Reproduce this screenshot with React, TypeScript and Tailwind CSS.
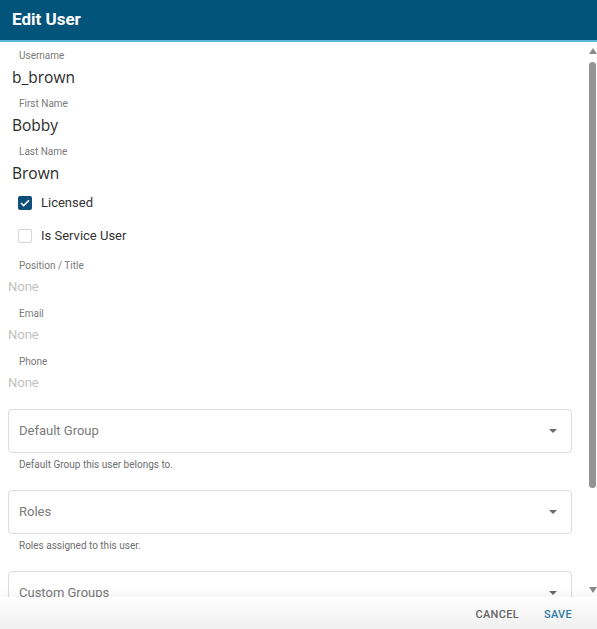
import React from 'react';

const textFields = [
    { label: 'Username', value: 'b_brown' },
    { label: 'First Name', value: 'Bobby' },
    { label: 'Last Name', value: 'Brown' },
];

const emptyFields = ['Position / Title', 'Email', 'Phone'];

const selects = [
    { label: 'Default Group', help: 'Default Group this user belongs to.' },
    { label: 'Roles', help: 'Roles assigned to this user.' },
    { label: 'Custom Groups', help: '' },
];

function Caret() {
    return (
        <svg width="8" height="4" viewBox="0 0 8 4" className="text-[#6b6b6b]">
            <path d="M0 0h8L4 4z" fill="currentColor" />
        </svg>
    );
}

export default function App() {
    return (
        <div className="h-[629px] w-[597px] flex flex-col bg-white font-['Roboto',sans-serif] overflow-hidden">
            {/* Header */}
            <div className="h-[42px] shrink-0 bg-[#03547b] border-b-2 border-[#5cb6da] flex items-center px-3">
                <h1 className="text-white text-[17px] font-bold">Edit User</h1>
            </div>

            {/* Body */}
            <div className="flex-1 flex min-h-0">
                <div className="flex-1 overflow-hidden pt-[3px] pr-4">
                    {textFields.map((f) => (
                        <div key={f.label} className="mb-1">
                            <div className="h-5 flex items-center pl-[19px] text-[10px] text-[#7a7a7a]">{f.label}</div>
                            <div className="h-6 flex items-center pl-3 pt-[2px] text-[15.5px] text-[#2b2b2b] font-['Open_Sans',sans-serif]">{f.value}</div>
                        </div>
                    ))}

                    <div className="h-[33px] flex items-center pl-[18px] gap-[9px] -mt-[3px]">
                        <span className="w-[14px] h-[14px] rounded-[2px] bg-[#0d4f78] flex items-center justify-center">
                            <svg width="10" height="8" viewBox="0 0 10 8">
                                <path d="M1 4l2.6 2.6L9 1.2" stroke="white" strokeWidth="1.6" fill="none" />
                            </svg>
                        </span>
                        <span className="text-[13px] text-[#333]">Licensed</span>
                    </div>
                    <div className="h-[33px] flex items-center pl-[18px] gap-[9px]">
                        <span className="w-[14px] h-[14px] rounded-[2px] border border-[#d6d6d6] bg-white" />
                        <span className="text-[13px] text-[#333]">Is Service User</span>
                    </div>

                    <div className="pt-[3px]">
                        {emptyFields.map((l) => (
                            <div key={l} className="mb-1">
                                <div className="h-5 flex items-center pl-[19px] text-[10px] text-[#7a7a7a]">{l}</div>
                                <div className="h-6 flex items-center pl-2 text-[13px] text-[#c2c2c2]">None</div>
                            </div>
                        ))}
                    </div>

                    <div className="pl-2 pt-[10px]">
                        {selects.map((s) => (
                            <div key={s.label}>
                                <div className="h-[44px] rounded border border-[#dcdcdc] flex items-center justify-between pl-[10px] pr-[14px]">
                                    <span className="text-[13px] text-[#7a7a7a]">{s.label}</span>
                                    <Caret />
                                </div>
                                <div className="h-4 mt-[3px] mb-[18px] flex items-center pl-[11px] text-[10px] text-[#6e6e6e]">{s.help}</div>
                            </div>
                        ))}
                    </div>
                </div>

                {/* Scrollbar */}
                <div className="w-[9px] shrink-0 flex flex-col items-center pt-[6px] pb-[4px]">
                    <svg width="8" height="6" viewBox="0 0 8 6" className="text-[#8a8a8a]">
                        <path d="M4 0L8 6H0z" fill="currentColor" />
                    </svg>
                    <div className="w-[7px] h-[426px] mt-[8px] rounded-full bg-[#949494]" />
                    <div className="flex-1" />
                    <svg width="8" height="6" viewBox="0 0 8 6" className="text-[#8a8a8a]">
                        <path d="M0 0h8L4 6z" fill="currentColor" />
                    </svg>
                </div>
            </div>

            {/* Footer */}
            <div className="h-[32px] shrink-0 bg-gradient-to-b from-white to-[#efefef] shadow-[0_-4px_8px_rgba(0,0,0,0.04)] flex items-center justify-end gap-[25px] pr-[25px] pt-[4px]">
                <button className="text-[11px] font-medium text-[#666] tracking-[0.3px]">CANCEL</button>
                <button className="text-[11px] font-medium text-[#2d7ba6] tracking-[0.3px]">SAVE</button>
            </div>
        </div>
    );
}
